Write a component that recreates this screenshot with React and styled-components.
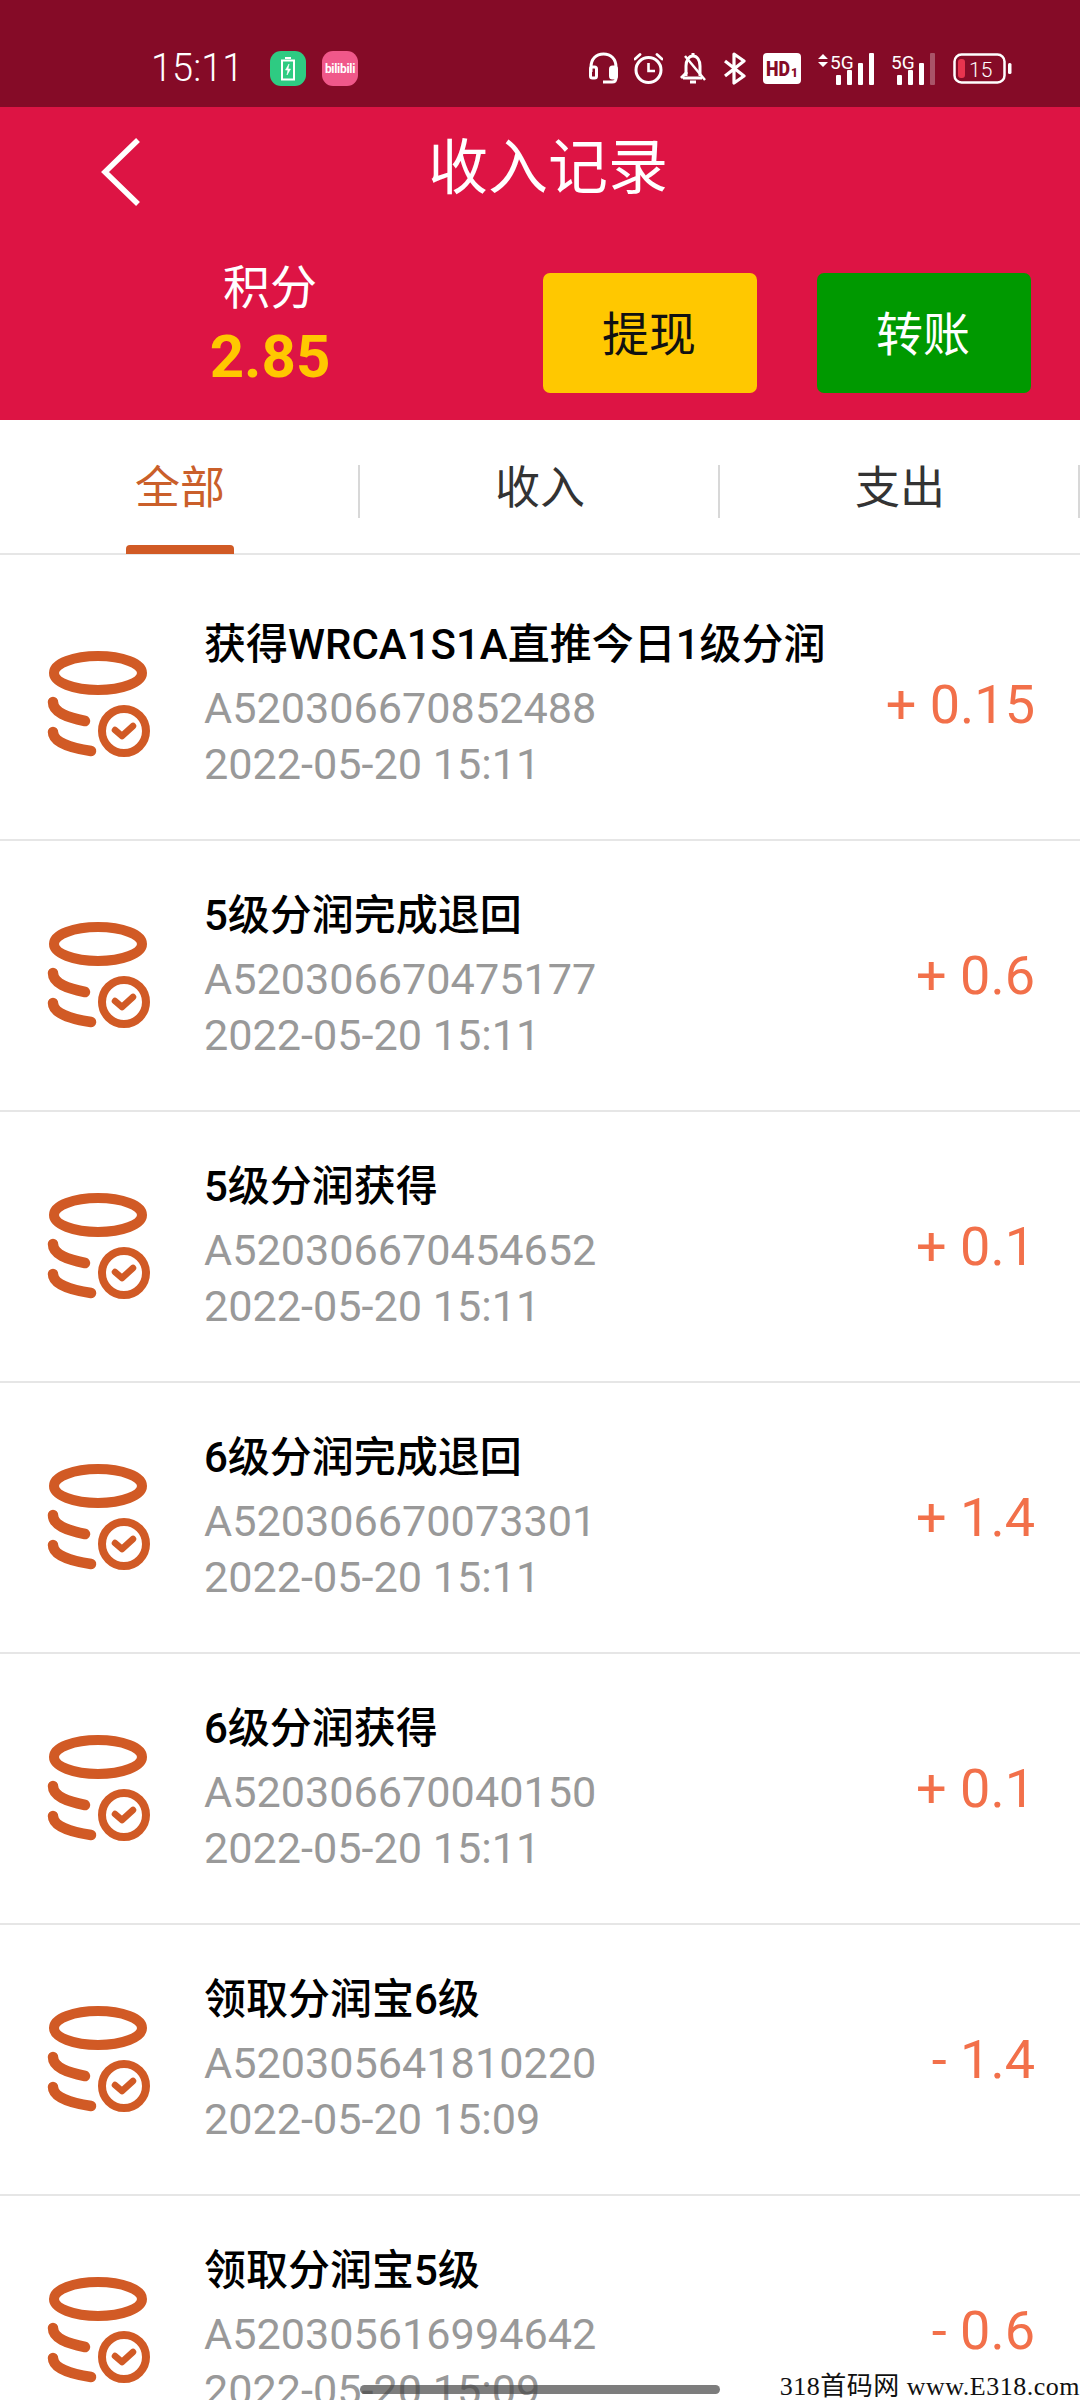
import React from "react";
import styled, { createGlobalStyle } from "styled-components";

const FONT = `Roboto, "Noto Sans CJK SC", sans-serif`;

const GlobalStyle = createGlobalStyle`
  html, body {
    margin: 0;
    padding: 0;
    background: #fff;
  }
  * {
    box-sizing: border-box;
  }
`;

const Page = styled.div`
  position: relative;
  width: 1080px;
  height: 2400px;
  overflow: hidden;
  background: #fff;
  font-family: ${FONT};
`;

const StatusBar = styled.div`
  height: 107px;
  padding: 51px 68px 0 151px;
  display: flex;
  justify-content: space-between;
  align-items: flex-start;
  background: #850b27;
  color: #fff;
`;

const StatusLeft = styled.div`
  display: flex;
  align-items: center;
  height: 35px;
`;

const Clock = styled.span`
  width: 119px;
  font-size: 38px;
  font-weight: 300;
  line-height: 35px;
`;

const AppBadge = styled.div`
  width: 36px;
  height: 35px;
  margin-right: 16px;
  border-radius: 11px;
  display: flex;
  align-items: center;
  justify-content: center;
  background: ${(p) => p.$bg};
`;

const BiliText = styled.span`
  font-size: 12px;
  font-weight: 700;
  letter-spacing: -0.3px;
  color: #fff;
`;

const StatusRight = styled.div`
  display: flex;
  align-items: center;
  gap: 16.6px;
  height: 35px;
`;

const Header = styled.div`
  height: 313px;
  padding-top: 24px;
  background: #dd1444;
  color: #fff;
`;

const TitleBar = styled.div`
  position: relative;
  height: 76px;
  display: flex;
  align-items: center;
  justify-content: center;
  padding-left: 16px;
`;

const Title = styled.h1`
  margin: 0;
  font-size: 60px;
  font-weight: 400;
  line-height: 76px;
`;

const BackIcon = styled.svg`
  position: absolute;
  left: 98px;
  top: 5px;
`;

const ActionRow = styled.div`
  display: flex;
  align-items: center;
  margin-top: 66px;
  padding-left: 140px;
`;

const Balance = styled.div`
  width: 260px;
  margin-right: 143px;
  display: flex;
  flex-direction: column;
  align-items: center;
`;

const BalanceLabel = styled.span`
  font-size: 47px;
  line-height: 62px;
  margin-top: -22px;
`;

const BalanceValue = styled.span`
  font-size: 60px;
  font-weight: 700;
  line-height: 76px;
  margin-bottom: -8px;
  color: #ffc800;
`;

const ActionButton = styled.div`
  width: 214px;
  height: 120px;
  margin-right: ${(p) => p.$gap || 0}px;
  padding: 0 2px 6px 0;
  border-radius: 7px;
  display: flex;
  align-items: center;
  justify-content: center;
  font-size: 47px;
  background: ${(p) => p.$bg};
  color: ${(p) => p.$color};
`;

const Tabs = styled.div`
  height: 135px;
  display: flex;
  border-bottom: 2px solid #e6e6e6;
`;

const Tab = styled.div`
  position: relative;
  width: 360px;
  height: 133px;
  padding-top: 44px;
  text-align: center;
  font-size: 45px;
  line-height: 50px;
  color: ${(p) => (p.$active ? "#ca5f2a" : "#333")};

  &::after {
    content: "";
    position: absolute;
    right: 0;
    top: 45px;
    width: 2px;
    height: 53px;
    background: #d8d8d8;
  }
`;

const TabMarker = styled.div`
  position: absolute;
  left: 126px;
  bottom: -1px;
  width: 108px;
  height: 9px;
  border-radius: 4px 4px 0 0;
  background: #d15a25;
`;

const List = styled.div`
  padding-top: 15px;
`;

const Row = styled.div`
  height: 271px;
  padding: 0 45px 0 46px;
  display: flex;
  align-items: center;
  border-bottom: 2px solid #e6e6e6;
`;

const CoinIcon = styled.svg`
  flex: none;
  margin-top: 1px;
  margin-right: 50px;
`;

const RowText = styled.div`
  flex: 1;
  margin-top: -2px;
  display: flex;
  flex-direction: column;
`;

const RowTitle = styled.div`
  font-size: 42px;
  font-weight: 500;
  line-height: 62px;
  color: #000;
  margin-bottom: 5px;
`;

const RowMeta = styled.div`
  font-size: 43.2px;
  line-height: 56px;
  color: #999;
`;

const Amount = styled.div`
  font-size: 54px;
  color: #f2704a;
  white-space: pre;
`;

const HomeBar = styled.div`
  position: absolute;
  left: 360px;
  top: 2385px;
  width: 360px;
  height: 9px;
  border-radius: 5px;
  background: rgba(70, 70, 70, 0.7);
`;

const Watermark = styled.div`
  position: absolute;
  right: 0;
  top: 2374px;
  padding-left: 4px;
  font-family: "Liberation Serif", "Noto Sans CJK SC", serif;
  font-size: 26px;
  line-height: 26px;
  letter-spacing: 0.5px;
  white-space: pre;
  color: #111;
  background: #fff;
`;

const Coin = () => (
  <CoinIcon width="108" height="112" viewBox="0 0 108 112" fill="none" stroke="#d15a25" strokeLinecap="round">
    <ellipse cx="52" cy="24" rx="44" ry="17" strokeWidth="10" />
    <path d="M7 53C7 63 20 68 39 72" strokeWidth="10.5" />
    <path d="M7 83C7 93 24 99 45 102" strokeWidth="10.5" />
    <circle cx="78" cy="82" r="22" strokeWidth="8" />
    <path d="M69 81L76 87L87 77" strokeWidth="6.5" strokeLinejoin="round" />
  </CoinIcon>
);

const Headset = () => (
  <svg width="29" height="33" viewBox="0 0 29 33" fill="none" stroke="#fff" strokeWidth="3">
    <path d="M2 20V15C2 7 7 2 14.5 2S27 7 27 15V26C27 29 26 30 23 30H14" />
    <rect x="1.5" y="15" width="6" height="11" rx="2" fill="none" />
    <rect x="21.5" y="15" width="6" height="11" rx="2" fill="#fff" />
  </svg>
);

const Alarm = () => (
  <svg width="29" height="33" viewBox="0 0 29 33" fill="none" stroke="#fff" strokeWidth="3">
    <circle cx="14.5" cy="18" r="12.5" />
    <path d="M14.5 11V19H21" strokeWidth="2.6" />
    <path d="M1 7L6 2.5M28 7L23 2.5" strokeWidth="2.8" strokeLinecap="round" />
  </svg>
);

const BellOff = () => (
  <svg width="26" height="33" viewBox="0 0 26 33" fill="none" stroke="#fff" strokeWidth="3">
    <path d="M3 26H22M6 24V14C6 8 9 4 13 4S20 8 20 14V24" />
    <path d="M1 26L7 20" />
    <path d="M5 4L25 28" strokeWidth="2.5" />
    <path d="M13 1V4M10 30H16" strokeWidth="3" />
  </svg>
);

const Bluetooth = () => (
  <svg width="24" height="33" viewBox="0 0 24 33" fill="none" stroke="#fff" strokeWidth="3.2">
    <path d="M2 9L21 24L11 31V2L21 9L2 24" strokeLinejoin="round" />
  </svg>
);

const HdBadge = () => (
  <svg width="38" height="31" viewBox="0 0 38 31">
    <rect width="38" height="31" rx="4" fill="#fff" />
    <text x="3" y="23" fontFamily="Roboto" fontWeight="900" fontSize="21" fill="#850b27" textLength="24" lengthAdjust="spacingAndGlyphs">HD</text>
    <text x="28" y="24" fontFamily="Roboto" fontWeight="900" fontSize="12" fill="#850b27">1</text>
  </svg>
);

const Signal = ({ arrows, dim }) => (
  <svg width={arrows ? 57 : 45} height="33" viewBox={arrows ? "0 0 57 33" : "0 0 45 33"} fill="#fff">
    {arrows && <path d="M0 7L5 2L10 7ZM0 10L5 15L10 10Z" />}
    <text x={arrows ? 12 : 0} y="17" fontFamily="Roboto" fontSize="19">5G</text>
    <g transform={arrows ? "translate(18 0)" : "translate(6 0)"}>
      <rect x="0" y="23" width="5" height="10" rx="1" />
      <rect x="11" y="18" width="5" height="15" rx="1" />
      <rect x="22" y="11" width="5" height="22" rx="1" />
      <rect x="33" y="1" width="5" height="32" rx="1" opacity={dim ? 0.3 : 1} />
    </g>
  </svg>
);

const Battery = () => (
  <svg width="59" height="31" viewBox="0 0 59 31" fill="none">
    <rect x="1.5" y="1.5" width="50" height="28" rx="7" stroke="#fff" strokeWidth="2.5" />
    <rect x="5" y="6" width="7" height="19" rx="3" fill="#e8344e" />
    <rect x="55" y="10" width="3.5" height="11" rx="1.5" fill="#fff" />
    <text x="16" y="24" fontFamily="Roboto" fontWeight="300" fontSize="21" fill="#fff">15</text>
  </svg>
);

const RECORDS = [
  { title: "获得WRCA1S1A直推今日1级分润", id: "A520306670852488", time: "2022-05-20 15:11", amount: "+ 0.15" },
  { title: "5级分润完成退回", id: "A520306670475177", time: "2022-05-20 15:11", amount: "+ 0.6" },
  { title: "5级分润获得", id: "A520306670454652", time: "2022-05-20 15:11", amount: "+ 0.1" },
  { title: "6级分润完成退回", id: "A520306670073301", time: "2022-05-20 15:11", amount: "+ 1.4" },
  { title: "6级分润获得", id: "A520306670040150", time: "2022-05-20 15:11", amount: "+ 0.1" },
  { title: "领取分润宝6级", id: "A520305641810220", time: "2022-05-20 15:09", amount: "- 1.4" },
  { title: "领取分润宝5级", id: "A520305616994642", time: "2022-05-20 15:09", amount: "- 0.6" },
];

const App = () => {
  return (
    <Page>
      <GlobalStyle />
      <StatusBar>
        <StatusLeft>
          <Clock>15:11</Clock>
          <AppBadge $bg="#2ecb82">
            <svg width="16" height="24" viewBox="0 0 16 24" fill="none" stroke="#fff" strokeWidth="2">
              <path d="M5 1H11M2 3.5H14V22.5H2Z" />
              <path d="M9 7L5.5 13H8L7 18L10.5 12H8Z" fill="#fff" strokeWidth="0.6" />
            </svg>
          </AppBadge>
          <AppBadge $bg="#f0588a">
            <BiliText>bilibili</BiliText>
          </AppBadge>
        </StatusLeft>
        <StatusRight>
          <Headset />
          <Alarm />
          <BellOff />
          <Bluetooth />
          <HdBadge />
          <Signal arrows />
          <Signal dim />
          <Battery />
        </StatusRight>
      </StatusBar>

      <Header>
        <TitleBar>
          <BackIcon width="44" height="72" viewBox="0 0 44 72" fill="none" stroke="#fff" strokeWidth="5.5">
            <path d="M40 4L7 36L40 68" />
          </BackIcon>
          <Title>收入记录</Title>
        </TitleBar>
        <ActionRow>
          <Balance>
            <BalanceLabel>积分</BalanceLabel>
            <BalanceValue>2.85</BalanceValue>
          </Balance>
          <ActionButton $bg="#ffc800" $color="#111" $gap={60}>提现</ActionButton>
          <ActionButton $bg="#009900" $color="#fff">转账</ActionButton>
        </ActionRow>
      </Header>

      <Tabs>
        <Tab $active>
          全部
          <TabMarker />
        </Tab>
        <Tab>收入</Tab>
        <Tab>支出</Tab>
      </Tabs>

      <List>
        {RECORDS.map((r) => (
          <Row key={r.id}>
            <Coin />
            <RowText>
              <RowTitle>{r.title}</RowTitle>
              <RowMeta>{r.id}</RowMeta>
              <RowMeta>{r.time}</RowMeta>
            </RowText>
            <Amount>{r.amount}</Amount>
          </Row>
        ))}
      </List>

      <HomeBar />
      <Watermark>318首码网 www.E318.com</Watermark>
    </Page>
  );
};

export default App;
